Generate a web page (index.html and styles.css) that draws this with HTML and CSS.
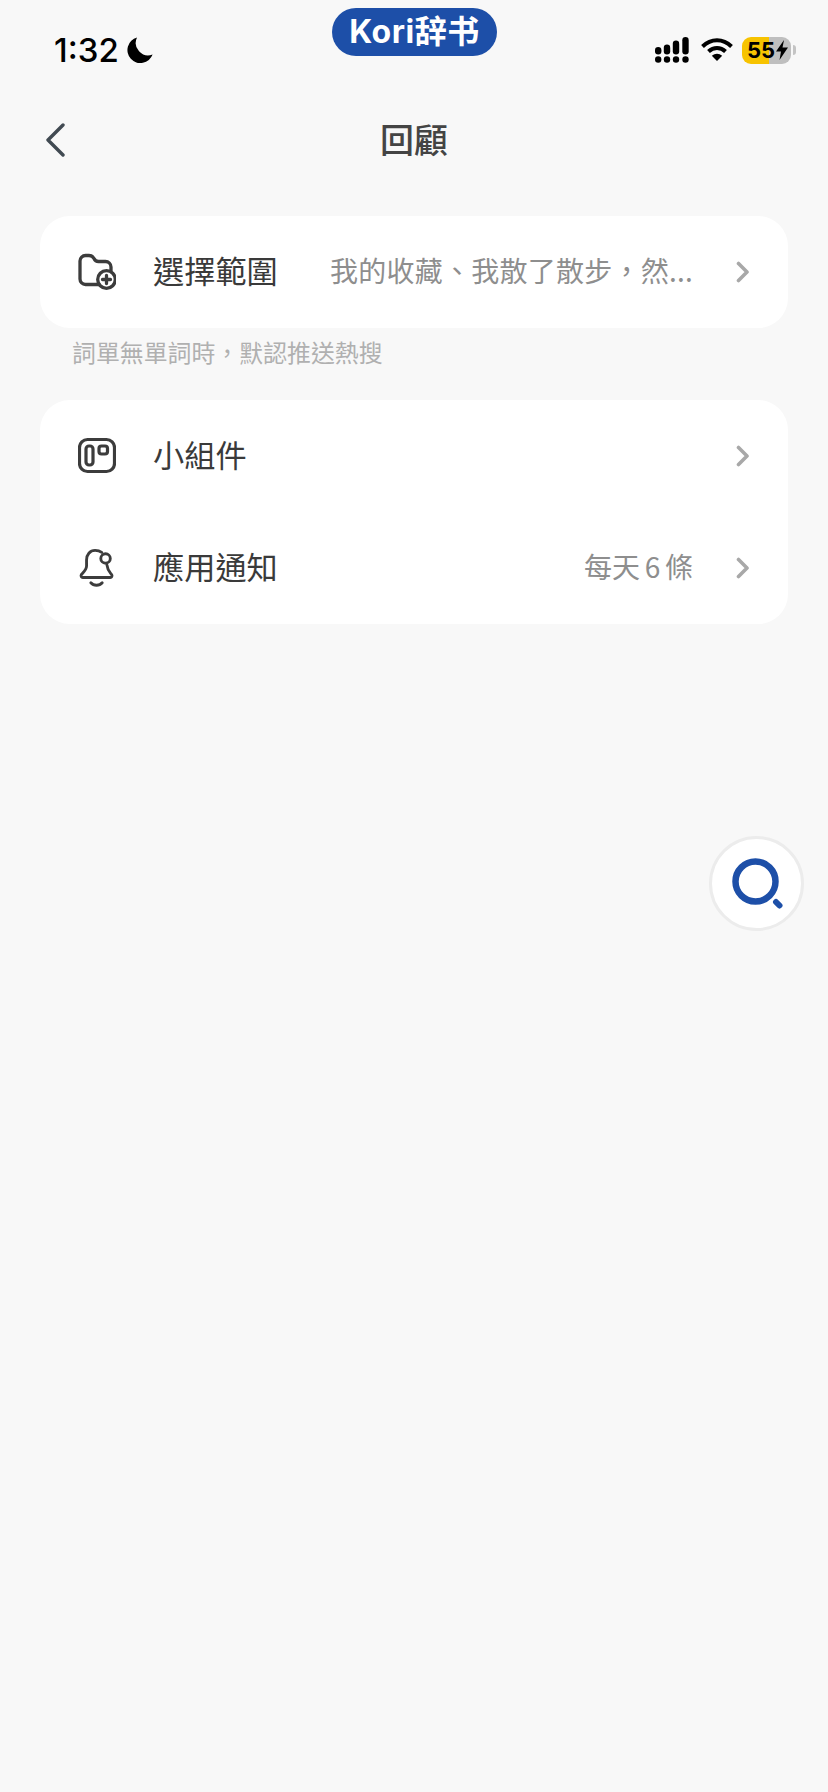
FILE: index.html
```html
<!DOCTYPE html>
<html lang="zh-Hant">
<head>
<meta charset="utf-8">
<title>回顧</title>
<link rel="stylesheet" href="styles.css">
</head>
<body>
<div class="page">
  <header class="status">
    <div class="status-left">
      <span class="time">1:32</span>
      <svg class="moon" viewBox="0 0 26 26"><path d="M10 0.5A13 13 0 1 0 25.6 17.6 12.5 12.5 0 0 1 10 0.5Z" fill="#000"/></svg>
    </div>
    <div class="status-right">
      <svg class="signal" viewBox="0 0 34 26" fill="#000">
        <circle cx="3.200" cy="22.500" r="3.200"/><circle cx="12" cy="22.500" r="3.200"/><circle cx="21" cy="22.500" r="3.200"/><circle cx="30.500" cy="22.500" r="3.200"/>
        <rect x="0" y="10" width="6.400" height="7.500" rx="3.200"/><rect x="8.800" y="7.500" width="6.400" height="10" rx="3.200"/><rect x="17.800" y="3.500" width="6.400" height="14" rx="3.200"/><rect x="27.300" y="0" width="6.400" height="17.500" rx="3.200"/>
      </svg>
      <svg class="wifi" viewBox="0 0 32 24" fill="none" stroke="#000" stroke-width="4">
        <path d="M1.500 9.500C10 1.200 22 1.200 30.500 9.500"/><path d="M7.500 14.500C12.500 9.800 19.500 9.800 24.500 14.500"/><path d="M16 24L10.800 18.800C14 16 18 16 21.200 18.800Z" fill="#000" stroke="none"/>
      </svg>
      <div class="battery">
        <span class="battery-num">55</span>
        <svg class="bolt" viewBox="0 0 12 20"><path d="M8 0L0 11.500H5L3.500 20L12 7.500H6.500Z" fill="#000"/></svg>
      </div>
      <span class="battery-cap"></span>
    </div>
  </header>
  <div class="island">Kori辞书</div>

  <nav class="navbar">
    <svg class="back" viewBox="0 0 20 34" fill="none" stroke="#414a52" stroke-width="3.400" stroke-linecap="round" stroke-linejoin="round"><path d="M18 2L3 17L18 32"/></svg>
    <h1 class="title">回顧</h1>
  </nav>

  <main class="content">
    <section class="card">
      <div class="row">
        <svg class="icon" viewBox="0 0 38 36" fill="none" stroke="#3c3c3c" stroke-width="3.300" stroke-linecap="round" stroke-linejoin="round">
          <path d="M21 30.500H7.500A5.500 5.500 0 0 1 2 25V7A5.500 5.500 0 0 1 7.500 1.500H11C13.500 1.500 15 2.500 16 4.500C17 6.800 18 7.500 20.500 7.500H27.500A5.500 5.500 0 0 1 33 13V17"/>
          <circle cx="28.500" cy="25.500" r="8.800"/>
          <path d="M28.500 21.500V29.500M24.500 25.500H32.500"/>
        </svg>
        <span class="label">選擇範圍</span>
        <span class="value value-long">我的收藏、我散了散步，然...</span>
        <svg class="chev" viewBox="0 0 14 22" fill="none" stroke="#a8a8a8" stroke-width="3.600" stroke-linecap="round" stroke-linejoin="round"><path d="M2.500 2.500L11 11L2.500 19.500"/></svg>
      </div>
    </section>
    <p class="note">詞單無單詞時，默認推送熱搜</p>
    <section class="card">
      <div class="row">
        <svg class="icon" viewBox="0 0 38 36" fill="none" stroke="#3c3c3c" stroke-width="3.200" stroke-linejoin="round">
          <rect x="1.500" y="1.500" width="35" height="32" rx="8"/>
          <rect x="8" y="8" width="7" height="19" rx="3"/>
          <rect x="21" y="8" width="8.500" height="8" rx="2.500"/>
        </svg>
        <span class="label">小組件</span>
        <svg class="chev chev-end" viewBox="0 0 14 22" fill="none" stroke="#a8a8a8" stroke-width="3.600" stroke-linecap="round" stroke-linejoin="round"><path d="M2.500 2.500L11 11L2.500 19.500"/></svg>
      </div>
      <div class="row">
        <svg class="icon" viewBox="0 0 38 40" fill="none" stroke="#3c3c3c" stroke-width="3" stroke-linecap="round" stroke-linejoin="round">
          <path d="M24 3.500C21.500 1.800 19 1.500 17 1.500C11.500 1.500 8 6 8 11.500V18C8 22 4.500 24.500 2.500 27C1.800 28.300 2.500 30 4 30H33C34.500 30 35.200 28.300 34.500 27C32.500 24.500 30 22.500 29.500 17"/>
          <circle cx="28" cy="10" r="5"/>
          <path d="M12.500 35.500C15.500 39 21.500 39 24.500 35.500"/>
        </svg>
        <span class="label">應用通知</span>
        <span class="value value-tight">每天 6 條</span>
        <svg class="chev" viewBox="0 0 14 22" fill="none" stroke="#a8a8a8" stroke-width="3.600" stroke-linecap="round" stroke-linejoin="round"><path d="M2.500 2.500L11 11L2.500 19.500"/></svg>
      </div>
    </section>
  </main>

  <button class="search-fab" type="button" aria-label="搜尋">
    <svg viewBox="0 0 52 52" fill="none" stroke="#1d4fa8" stroke-linecap="round"><circle cx="24.500" cy="23.500" r="20" stroke-width="6.500"/><path d="M45 44L48.500 47.500" stroke-width="6"/></svg>
  </button>
</div>
</body>
</html>
```
FILE: styles.css
```css
* { box-sizing: border-box; }
html, body { margin: 0; padding: 0; }
body {
  background: #f8f8f8;
  font-family: "Noto Sans CJK TC", "Noto Sans", sans-serif;
  color: #3a3a3a;
}
.page {
  position: relative;
  width: 828px;
  height: 1792px;
  overflow: hidden;
  background: #f8f8f8;
}
.status {
  display: flex;
  justify-content: space-between;
  align-items: center;
  height: 100px;
  padding: 0 32px 0 54px;
}
.status-left { display: flex; align-items: center; gap: 8px; }
.time {
  font-family: Inter, "Liberation Sans", sans-serif;
  font-size: 33px;
  font-weight: 500;
  line-height: 40px;
  color: #000;
}
.moon { width: 26px; height: 26px; }
.status-right { display: flex; align-items: center; }
.signal { width: 34px; height: 26px; margin-right: 12px; }
.wifi { width: 32px; height: 24px; margin-right: 9px; margin-top: -3px; }
.battery {
  display: flex;
  align-items: center;
  width: 49px;
  height: 27px;
  padding-left: 5px;
  border-radius: 9px;
  background: linear-gradient(to right, #f7c300 0 55%, #bfbfbf 55% 100%);
}
.battery-num {
  font-family: Inter, "Liberation Sans", sans-serif;
  font-size: 22px;
  font-weight: 700;
  line-height: 27px;
  color: #000;
}
.bolt { width: 12px; height: 20px; margin-left: 1px; }
.battery-cap {
  width: 3px;
  height: 10px;
  margin-left: 2px;
  border-radius: 0 3px 3px 0;
  background: #c4c4c4;
}
.island {
  position: absolute;
  left: 332px;
  top: 8px;
  width: 165px;
  height: 48px;
  border-radius: 24px;
  background: #1d4fa8;
  color: #fff;
  font-family: Inter, "Noto Sans CJK SC", sans-serif;
  font-size: 32px;
  font-weight: 700;
  letter-spacing: 0.5px;
  line-height: 48px;
  text-align: center;
  white-space: nowrap;
}
.navbar {
  position: relative;
  display: flex;
  align-items: center;
  justify-content: center;
  height: 80px;
  margin-top: -1px;
}
.back {
  position: absolute;
  left: 45px;
  top: 24px;
  width: 20px;
  height: 34px;
}
.title {
  margin: 0;
  font-size: 34px;
  font-weight: 500;
  line-height: 48px;
  color: #444;
}
.content { padding: 37px 40px 0; }
.card {
  background: #fff;
  border-radius: 30px;
}
.row {
  display: flex;
  align-items: center;
  height: 112px;
  padding: 0 38px 0 38px;
}
.icon { width: 38px; height: 38px; flex: none; margin-right: 37px; }
.label {
  margin-bottom: 4px;
  font-size: 31.200px;
  line-height: 44px;
  color: #3a3a3a;
  white-space: nowrap;
}
.value {
  margin-left: auto;
  margin-bottom: 4px;
  font-size: 28px;
  line-height: 40px;
  color: #8e8e8e;
  white-space: nowrap;
}
.value-long { letter-spacing: 0.250px; }
.value-tight { word-spacing: -1.500px; }
.chev { width: 14px; height: 22px; flex: none; margin-left: 43px; }
.chev-end { margin-left: auto; }
.note {
  margin: 4px 0 29px;
  padding-left: 32px;
  font-size: 23.900px;
  line-height: 39px;
  color: #b0b0b0;
}
.search-fab {
  position: absolute;
  left: 709px;
  top: 836px;
  width: 95px;
  height: 95px;
  padding: 0;
  display: flex;
  align-items: center;
  justify-content: center;
  border: 3px solid #ececec;
  border-radius: 50%;
  background: #fff;
}
.search-fab svg { width: 52px; height: 52px; }
```
